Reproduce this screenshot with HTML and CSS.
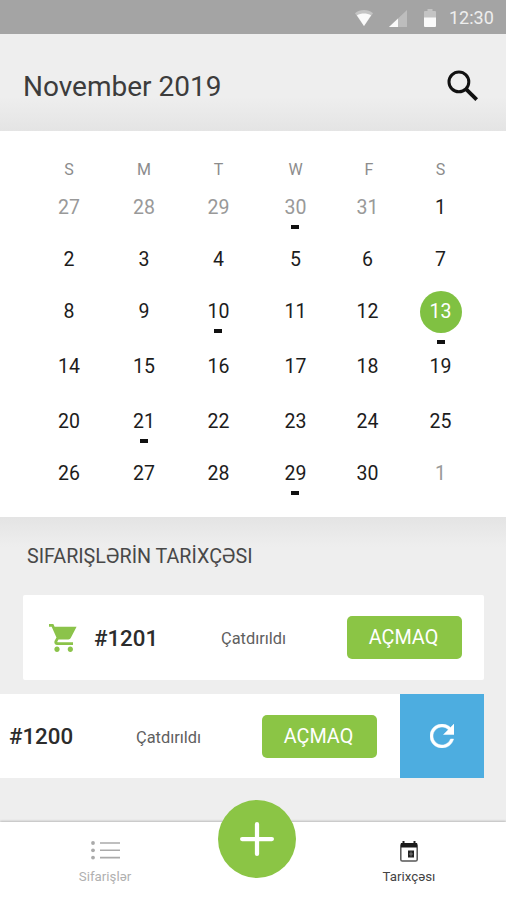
FILE: index.html
```html
<!DOCTYPE html>
<html lang="az">
<head>
<meta charset="utf-8">
<title>Tarixçəsı</title>
<link rel="stylesheet" href="styles.css">
</head>
<body>
<div class="app">
  <div class="status">
    <svg class="wifi" viewBox="0 0 18 16"><path fill="#c4c4c4" d="M0 3.2C5-1 13-1 18 3.2L9 16z"/><path fill="#fafafa" d="M1.900 5.300C6 2.800 12 2.800 16.100 5.300L9 16z"/></svg>
    <svg class="signal" viewBox="0 0 18 17"><path fill="#bdbdbd" d="M18 0v17H0z"/><path fill="#fafafa" d="M9 8.500V17H0z"/></svg>
    <svg class="battery" viewBox="0 0 12 18"><path fill="#c4c4c4" d="M1 2h2.500V0h5v2H11q1 0 1 1v6H0V3q0-1 1-1z"/><path fill="#fafafa" d="M0 8.500h12V17q0 1-1 1H1q-1 0-1-1z"/></svg>
    <span class="clock">12:30</span>
  </div>
  <header class="header">
    <h1 class="title">November 2019</h1>
    <svg class="search" viewBox="0 0 32 32" fill="none" stroke="#111"><circle cx="11.900" cy="11.900" r="9.900" stroke-width="3"/><path d="M18.800 18.800L29.700 29.700" stroke-width="3.800"/></svg>
  </header>
  <section class="calendar">
    <span class="day">S</span><span class="day">M</span><span class="day">T</span><span class="day">W</span><span class="day friday">F</span><span class="day">S</span>
    <span class="date muted">27</span><span class="date muted">28</span><span class="date muted">29</span><span class="date muted marked">30</span><span class="date muted">31</span><span class="date">1</span>
    <span class="date">2</span><span class="date">3</span><span class="date">4</span><span class="date">5</span><span class="date">6</span><span class="date">7</span>
    <span class="date">8</span><span class="date">9</span><span class="date marked">10</span><span class="date">11</span><span class="date">12</span><span class="date marked selected"><b class="disc">13</b></span>
    <span class="date">14</span><span class="date">15</span><span class="date">16</span><span class="date">17</span><span class="date">18</span><span class="date">19</span>
    <span class="date">20</span><span class="date marked">21</span><span class="date">22</span><span class="date">23</span><span class="date">24</span><span class="date">25</span>
    <span class="date">26</span><span class="date">27</span><span class="date">28</span><span class="date marked">29</span><span class="date">30</span><span class="date muted">1</span>
  </section>
  <main class="history">
    <h2 class="heading">SIFARIŞLƏRİN TARİXÇƏSI</h2>
    <article class="order">
      <svg class="cart" viewBox="1 2 21 20" preserveAspectRatio="none" fill="#8bc34a"><path d="M7 18c-1.100 0-1.990.9-1.990 2S5.900 22 7 22s2-.9 2-2-.9-2-2-2zM1 2v2h2l3.600 7.590-1.350 2.450c-.16.28-.25.61-.25.96 0 1.100.9 2 2 2h12v-2H7.420c-.14 0-.25-.11-.25-.25l.03-.12.900-1.630h7.450c.75 0 1.410-.41 1.750-1.030L21.700 4H5.210l-.94-2H1zm16 16c-1.100 0-1.990.9-1.990 2s.89 2 1.990 2 2-.9 2-2-.9-2-2-2z"/></svg>
      <span class="number">#1201</span>
      <span class="state">Çatdırıldı</span>
      <button class="open">AÇMAQ</button>
    </article>
    <article class="order swiped">
      <span class="number">#1200</span>
      <span class="state">Çatdırıldı</span>
      <button class="open">AÇMAQ</button>
      <div class="repeat"><svg class="reload" viewBox="4 4 16 16" fill="#fff" stroke="#fff" stroke-width=".3"><path d="M17.650 6.350C16.200 4.900 14.210 4 12 4c-4.420 0-7.990 3.580-7.990 8s3.570 8 7.990 8c3.730 0 6.840-2.550 7.730-6h-2.080c-.82 2.330-3.040 4-5.650 4-3.310 0-6-2.690-6-6s2.690-6 6-6c1.660 0 3.140.69 4.220 1.780L13 11h7V4l-2.350 2.350z"/></svg></div>
    </article>
  </main>
  <nav class="nav">
    <div class="tab">
      <svg class="list" viewBox="0 0 29 19" fill="#aaa"><circle cx="2" cy="2" r="1.900"/><circle cx="2" cy="9.300" r="1.900"/><circle cx="2" cy="16.600" r="1.900"/><path d="M9 1.200h20v1.600H9zM9 8.500h20v1.600H9zM9 15.800h20v1.600H9z"/></svg>
      <span>Sifarişlər</span>
    </div>
    <div class="add"><svg class="plus" viewBox="0 0 32 32" stroke="#fff" stroke-width="4" stroke-linecap="round"><path d="M16 2v28M2 16h28"/></svg></div>
    <div class="tab active">
      <svg class="cal" viewBox="0 0 18 21"><path d="M3.500 0v4M14.500 0v4" stroke="#222" stroke-width="2"/><rect x=".8" y="2.800" width="16.400" height="17.200" rx="1.600" fill="none" stroke="#555" stroke-width="1.500"/><path fill="#1b1b1b" d="M1 2h16v4.500H1z"/><path fill="#222" d="M8 9.500h6v7H8z"/><path stroke="#999" stroke-width=".7" d="M11 10.500v5M9 13h4"/></svg>
      <span>Tarixçəsı</span>
    </div>
  </nav>
</div>
</body>
</html>
```
FILE: styles.css
```css
* { box-sizing: border-box; }
body { margin: 0; font-family: Roboto, "Noto Sans", sans-serif; }
.app { width: 506px; height: 900px; display: flex; flex-direction: column; overflow: hidden; background: #eee; }
.status { height: 34px; flex: none; display: flex; align-items: center; padding: 2px 11px 0 355px; background: #a4a4a4; }
.wifi { width: 18px; height: 16px; }
.signal { width: 18px; height: 17px; margin-left: 16px; }
.battery { width: 12px; height: 18px; margin-left: 17px; }
.clock { margin-left: 13px; font-size: 18px; line-height: 34px; color: #eee; white-space: nowrap; }
.header { height: 97px; flex: none; display: flex; align-items: center; justify-content: space-between; padding: 8px 27px 0 23px; background: linear-gradient(#eee 65%, #e4e4e4); }
.title { margin: 0; font-size: 28px; font-weight: 400; line-height: 34px; color: #3c3c3c; }
.search { width: 32px; height: 32px; margin-top: -1px; }
.calendar { height: 386px; flex: none; display: grid; grid-template-columns: 76px 74px 75px 79px 65px 81px; grid-template-rows: 24px 53px 51px 53px 57px 52px 53px; align-items: center; justify-items: center; padding: 26px 0 17px 31px; align-content: start; background: #fff; }
.day { font-size: 16px; line-height: 20px; padding-top: 1px; color: #8c8c8c; }
.friday { padding-left: 3px; }
.date { position: relative; font-size: 19.500px; line-height: 24px; padding-top: 1px; color: #1c1c1c; }
.muted { color: #999; }
.marked::after { content: ""; position: absolute; left: 50%; top: 30px; width: 8px; height: 4px; margin-left: -4px; background: #111; }
.disc { display: flex; align-items: center; justify-content: center; width: 42px; height: 42px; margin-top: -1px; border-radius: 50%; background: #80c142; color: #fff; font-weight: 400; }
.selected::after { top: 49px; }
.history { flex: 1; display: flex; flex-direction: column; background: linear-gradient(#e4e4e4, #eee 30px); }
.heading { margin: 0; height: 78px; padding: 0 27px; font-size: 19.700px; font-weight: 400; line-height: 79px; color: #484848; white-space: nowrap; }
.order { display: flex; align-items: center; width: 461px; height: 85px; flex: none; margin-left: 23px; padding: 0 22px 0 26px; background: #fff; border-radius: 2px; }
.cart { width: 28px; height: 28px; margin-right: 17px; }
.number { width: 127px; font-size: 22.300px; font-weight: 500; color: #2c2c2c; }
.state { width: 126px; padding-top: 2px; font-size: 16.400px; color: #606060; white-space: nowrap; }
.open { width: 115px; height: 43px; flex: none; padding: 0 2px 0 0; border: 0; border-radius: 5px; background: #8bc545; color: #fff; font-family: inherit; font-size: 19.800px; }
.swiped { width: 484px; height: 84px; margin: 14px 0 0; padding: 0 0 0 9px; border-radius: 0; }
.repeat { width: 84px; height: 84px; flex: none; margin-left: auto; display: flex; align-items: center; justify-content: center; background: #4dade0; }
.reload { width: 24px; height: 24px; }
.nav { height: 78px; flex: none; display: flex; justify-content: center; padding-left: 8px; background: #fff; box-shadow: 0 -1px 2px #bbb; }
.tab { width: 114px; height: 78px; display: flex; flex-direction: column; align-items: center; padding-top: 19px; font-size: 13.300px; color: #b0b0b0; }
.list { width: 29px; height: 19px; margin-bottom: 9px; }
.cal { width: 18px; height: 21px; margin-bottom: 7px; }
.active { color: #444; }
.add { width: 78px; height: 78px; margin: -22px 56px 0; display: flex; align-items: center; justify-content: center; border-radius: 50%; background: #8bc545; }
.plus { width: 34px; height: 34px; }
```
